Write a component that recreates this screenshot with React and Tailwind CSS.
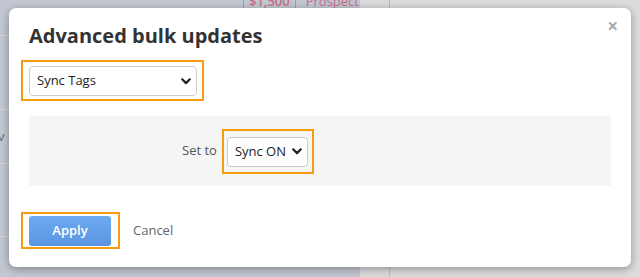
import React from "react";

const Chevron = () => (
  <svg width="10" height="7" viewBox="0 0 10 7" fill="none">
    <path d="M1.2 1.3 L5 5.1 L8.8 1.3" stroke="#222" strokeWidth="2.2" strokeLinecap="round" strokeLinejoin="round" />
  </svg>
);

const Highlight = ({ className, children }) => (
  <div className={`border-2 border-[#f99b0e] ${className}`}>{children}</div>
);

const App = () => {
  return (
    <div className="relative w-[640px] h-[277px] overflow-hidden font-['Open_Sans',sans-serif]">
      {/* page behind the dialog, dimmed */}
      <div className="flex h-full">
        <div className="w-[360px] h-full bg-[#c3c7d1] flex flex-col">
          <div className="h-[8px] flex items-end overflow-hidden">
            <div className="ml-[243px] h-[20px] border-l border-r border-[#c98a9d] px-[5px] text-[13px] leading-[14px] font-semibold text-[#c76e88] flex items-end">$1,500</div>
            <div className="ml-[10px] text-[13px] leading-[14px] text-[#c76e88]">Prospect</div>
          </div>
          <div className="h-[28px] border-b border-[#d4d6dd]" />
          <div className="h-[74px] border-b border-[#d4d6dd]" />
          <div className="h-[54px] border-b border-[#d4d6dd] flex items-center">
            <span className="text-[13px] text-[#6a6d75] -ml-[2px]">v</span>
          </div>
          <div className="h-[73px] border-b border-[#d4d6dd]" />
        </div>
        <div className="w-[30px] h-full bg-[#dcdcdf] border-r border-[#b9bbc2]" />
        <div className="flex-1 h-full bg-[#dcdcdf]" />
      </div>

      {/* dialog */}
      <div className="absolute left-[9px] top-[8px] w-[622px] h-[259px] bg-white rounded-[7px] shadow-[0_2px_8px_rgba(0,0,0,0.35)] pl-[12px] pr-[20px] pt-[14px]">
        <button className="absolute right-[13px] top-[9px] text-[#aaaaaa] text-[19px] font-bold leading-none">×</button>
        <h2 className="ml-[8px] text-[20px] leading-[28px] font-bold text-[#333333]">Advanced bulk updates</h2>

        <Highlight className="mt-[10px] w-[183px] h-[41px] p-[4px] pl-[6px]">
          <div className="w-[168px] h-[30px] border border-[#cccccc] rounded-[4px] flex items-center justify-between pl-[7px] pr-[5px] text-[13px] text-[#222]">
            <span>Sync Tags</span>
            <Chevron />
          </div>
        </Highlight>

        <div className="ml-[8px] mt-[15px] w-[582px] h-[70px] bg-[#f5f5f5] flex items-center">
          <span className="ml-[153px] mr-[5px] text-[13px] text-[#555555]">Set to</span>
          <Highlight className="w-[92px] h-[45px] pt-[6px] pl-[3px]">
            <div className="w-[81px] h-[30px] bg-white border border-[#cccccc] rounded-[4px] flex items-center justify-between pl-[7px] pr-[5px] text-[13px] text-[#222]">
              <span>Sync ON</span>
              <Chevron />
            </div>
          </Highlight>
        </div>

        <div className="mt-[26px] flex items-center">
          <Highlight className="w-[99px] h-[37px] pl-[6px] pt-[2px]">
            <button className="w-[82px] h-[30px] rounded-[3px] bg-gradient-to-b from-[#6daaf2] to-[#5b95e2] text-white text-[13px] font-semibold">Apply</button>
          </Highlight>
          <span className="ml-[13px] text-[13px] text-[#666666]">Cancel</span>
        </div>
      </div>
    </div>
  );
};

export default App;
